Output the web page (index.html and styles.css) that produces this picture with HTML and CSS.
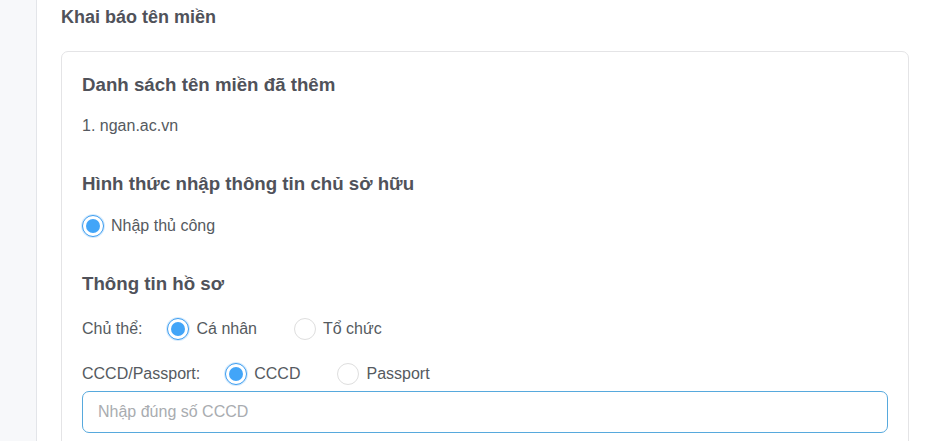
FILE: index.html
```html
<!DOCTYPE html>
<html lang="vi">
<head>
<meta charset="utf-8">
<title>Khai báo tên miền</title>
<link rel="stylesheet" href="styles.css">
</head>
<body>
<div class="layout">
  <aside class="sidebar"></aside>
  <main class="main">
    <h2 class="page-title">Khai báo tên miền</h2>
    <section class="card">
      <h3 class="heading h-first">Danh sách tên miền đã thêm</h3>
      <p class="domain">1. ngan.ac.vn</p>
      <h3 class="heading h-second">Hình thức nhập thông tin chủ sở hữu</h3>
      <div class="row">
        <label class="option"><span class="radio checked"></span><span>Nhập thủ công</span></label>
      </div>
      <h3 class="heading h-third">Thông tin hồ sơ</h3>
      <div class="row field-row">
        <span class="field-label">Chủ thể:</span>
        <label class="option"><span class="radio checked"></span><span>Cá nhân</span></label>
        <label class="option"><span class="radio"></span><span>Tổ chức</span></label>
      </div>
      <div class="row field-row">
        <span class="field-label">CCCD/Passport:</span>
        <label class="option"><span class="radio checked"></span><span>CCCD</span></label>
        <label class="option"><span class="radio"></span><span>Passport</span></label>
      </div>
      <input class="text-input" type="text" placeholder="Nhập đúng số CCCD" autofocus>
    </section>
  </main>
</div>
</body>
</html>
```

FILE: styles.css
```css
* { box-sizing: border-box; }
html, body {
  margin: 0;
  padding: 0;
  background: #ffffff;
  font-family: "Liberation Sans", Arial, sans-serif;
  color: #555a60;
}
.layout {
  display: flex;
  min-height: 441px;
}
.sidebar {
  width: 37px;
  flex: none;
  background: #f7f8fa;
  border-right: 1px solid #e3e5e9;
}
.main {
  flex: 1;
  padding: 0 22px 0 24px;
}
.page-title {
  margin: 0;
  padding-top: 5px;
  font-size: 18px;
  line-height: 24px;
  font-weight: bold;
  color: #50525a;
}
.card {
  margin-top: 22px;
  border: 1px solid #e4e4e6;
  border-radius: 7px;
  padding: 21px 20px 40px 20px;
}
.heading {
  margin: 0;
  font-size: 18.7px;
  line-height: 24px;
  font-weight: bold;
  color: #50525a;
}
.domain {
  margin: 17px 0 0 0;
  font-size: 16px;
  line-height: 24px;
  color: #555a60;
}
.h-second { margin-top: 34px; }
.h-third { margin-top: 34px; }
.row {
  display: flex;
  align-items: center;
  height: 24px;
  margin-top: 18px;
  font-size: 16px;
  color: #555a60;
}
.field-row { margin-top: 21px; }
.field-label {
  margin-right: 25px;
}
.option {
  display: inline-flex;
  align-items: center;
  gap: 7px;
  margin-right: 37px;
}
.radio {
  width: 22px;
  height: 22px;
  border-radius: 50%;
  border: 1px solid #dedede;
  background: #ffffff;
  display: inline-block;
  position: relative;
  flex: none;
}
.radio.checked {
  border: 1px solid #3d9df0;
  box-shadow: 0 0 0 1px #d6ebfd;
}
.radio.checked::after {
  content: "";
  position: absolute;
  left: 3px;
  top: 3px;
  width: 14px;
  height: 14px;
  border-radius: 50%;
  background: #42a5f8;
}
.text-input {
  display: block;
  width: 100%;
  height: 42px;
  margin-top: 5px;
  border: 1px solid #57a9dd;
  border-radius: 7px;
  padding: 0 15px;
  font-family: "Liberation Sans", Arial, sans-serif;
  font-size: 16px;
  color: #333;
  outline: none;
  background: #fff;
}
.text-input::placeholder {
  color: #a9acb0;
}
```
